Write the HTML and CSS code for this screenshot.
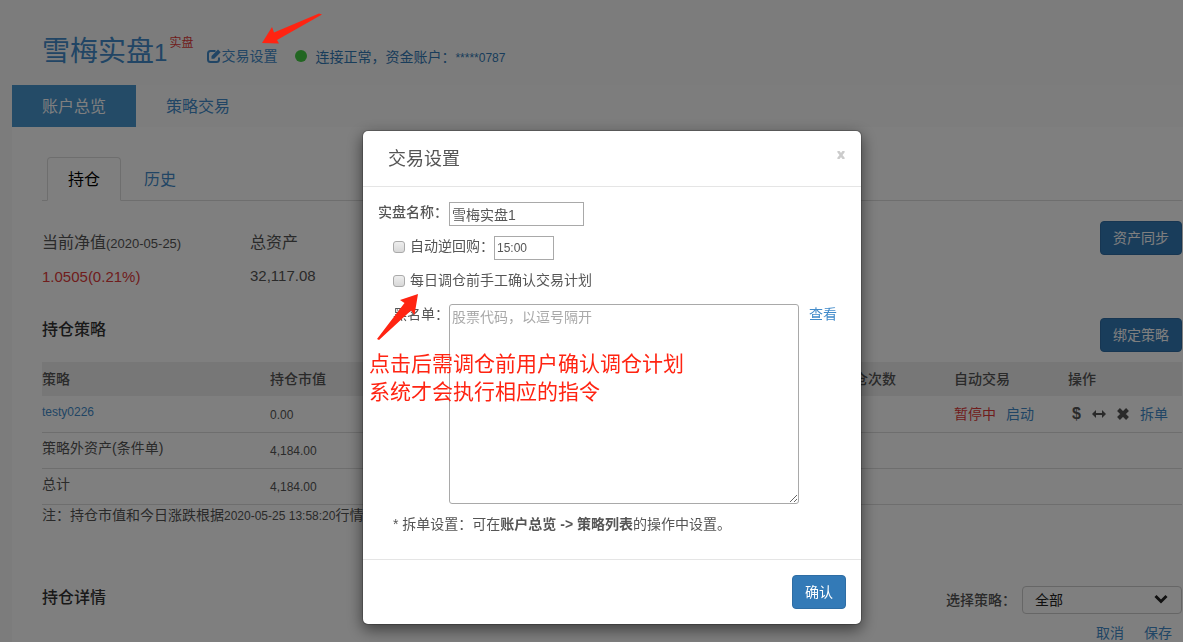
FILE: index.html
```
<!DOCTYPE html>
<html lang="zh-CN">

<head>
    <meta charset="UTF-8">
    <meta name="viewport" content="width=device-width, initial-scale=1.0">
    <title>实盘交易</title>
    <link rel="stylesheet" href="styles.css">
</head>

<body>
    <div class="page">
        <header class="account">
            <h1 class="account-name">雪梅实盘<span class="account-no">1</span></h1>
            <span class="account-tag">实盘</span>
            <a href="#" class="account-setting">
                <svg class="icon-edit" viewBox="0 0 14 14" width="14" height="14">
                    <path d="M8.500 2H3.500Q1 2 1 4.500v6q0 2.500 2.500 2.500h6q2.500 0 2.500-2.500V8.500" fill="none" stroke="currentColor" stroke-width="2" />
                    <path d="M4.500 7 11 .500 13.700 3.200 7.200 9.700H4.500z" fill="currentColor" />
                </svg>交易设置</a>
            <span class="status-dot"></span>
            <span class="status-text">连接正常，资金账户：<span class="num">*****0787</span></span>
        </header>

        <nav class="main-nav">
            <a href="#" class="active">账户总览</a>
            <a href="#">策略交易</a>
        </nav>

        <main class="panel">
            <nav class="tabs">
                <a href="#" class="active">持仓</a>
                <a href="#">历史</a>
            </nav>

            <section class="summary">
                <div class="stat">
                    <div class="stat-label">当前净值<span class="stat-date">(2020-05-25)</span></div>
                    <div class="stat-value red">1.0505(0.21%)</div>
                </div>
                <div class="stat">
                    <div class="stat-label">总资产</div>
                    <div class="stat-value">32,117.08</div>
                </div>
                <button type="button" class="btn">资产同步</button>
            </section>

            <div class="section-head">
                <h2>持仓策略</h2>
                <button type="button" class="btn">绑定策略</button>
            </div>

            <table class="strategy">
                <thead>
                    <tr>
                        <th class="col-name">策略</th>
                        <th>持仓市值</th>
                        <th colspan="4" class="col-wide"></th>
                        <th>调仓次数</th>
                        <th>自动交易</th>
                        <th>操作</th>
                    </tr>
                </thead>
                <tbody>
                    <tr>
                        <td class="name"><a href="#" class="num">testy0226</a></td>
                        <td><span class="num">0.00</span></td>
                        <td colspan="4"></td>
                        <td></td>
                        <td><span class="red">暂停中</span> <a href="#" class="start">启动</a></td>
                        <td>
                            <div class="actions">
                                <span class="dollar">$</span>
                                <svg viewBox="0 0 14 8" width="14" height="8">
                                    <path d="M0 4 4 0V3h6V0L14 4l-4 4V5H4v3z" fill="currentColor" />
                                </svg>
                                <svg viewBox="0 0 12 12" width="12" height="12">
                                    <path d="M1.500 1.500 10.500 10.500M10.500 1.500 1.500 10.500" stroke="currentColor" stroke-width="4" />
                                </svg>
                                <a href="#">拆单</a>
                            </div>
                        </td>
                    </tr>
                    <tr>
                        <td class="name">策略外资产(条件单)</td>
                        <td><span class="num">4,184.00</span></td>
                        <td colspan="7"></td>
                    </tr>
                    <tr>
                        <td class="name">总计</td>
                        <td><span class="num">4,184.00</span></td>
                        <td colspan="7"></td>
                    </tr>
                </tbody>
            </table>
            <p class="note">注：持仓市值和今日涨跌根据<span class="num">2020-05-25 13:58:20</span>行情数据</p>

            <div class="section-head detail-head">
                <h2>持仓详情</h2>
                <div class="filter">
                    <label for="strategy">选择策略：</label>
                    <div class="select-box">
                        <select id="strategy">
                            <option>全部</option>
                        </select>
                        <svg class="chevron" viewBox="0 0 14 10" width="14" height="10">
                            <path d="M1.500 2 7 7.500 12.500 2" fill="none" stroke="currentColor" stroke-width="3" />
                        </svg>
                    </div>
                </div>
            </div>
            <div class="detail-links">
                <a href="#">取消</a>
                <a href="#">保存</a>
            </div>
        </main>
    </div>

    <div class="overlay">
        <form class="modal">
            <div class="modal-header">
                <h4>交易设置</h4>
                <button type="button" class="close" aria-label="关闭">
                    <svg viewBox="0 0 8 8" width="8" height="8">
                        <path d="M1 0 7 8M7 0 1 8" stroke="currentColor" stroke-width="2.500" />
                    </svg>
                </button>
            </div>
            <div class="modal-body">
                <div class="row">
                    <label for="name" class="strong">实盘名称：</label>
                    <input type="text" id="name" class="name-input" value="雪梅实盘1">
                </div>
                <div class="row indent">
                    <input type="checkbox" id="repo">
                    <label for="repo">自动逆回购：</label>
                    <input type="text" class="time-input" value="15:00" aria-label="自动逆回购时间">
                </div>
                <div class="row indent">
                    <input type="checkbox" id="confirm">
                    <label for="confirm">每日调仓前手工确认交易计划</label>
                </div>
                <div class="row indent blacklist">
                    <label for="blacklist">黑名单：</label>
                    <textarea id="blacklist" placeholder="股票代码，以逗号隔开"></textarea>
                    <a href="#">查看</a>
                </div>
                <p class="tip">* 拆单设置：可在<b>账户总览 -&gt; 策略列表</b>的操作中设置。</p>
            </div>
            <div class="modal-footer">
                <button type="submit" class="btn">确认</button>
            </div>
        </form>
    </div>

    <!-- 标注 -->
    <svg class="mark mark-top" viewBox="0 0 60 32" width="60" height="32">
        <path d="M0 30 10 14 12 19.500 57 .500 60 1.500 15 27 17 30.500z" fill="#ff2412" />
    </svg>
    <svg class="mark mark-modal" viewBox="0 0 44 48" width="44" height="48">
        <path d="M42 1 24 7 28.500 10 1 46 3 47 35 17.500 38.500 22z" fill="#ff2412" />
    </svg>
    <p class="mark mark-text">点击后需调仓前用户确认调仓计划<br>系统才会执行相应的指令</p>
</body>

</html>
```
FILE: styles.css
```
* {
    box-sizing: border-box;
}

body {
    margin: 0;
    height: 100vh;
    overflow: hidden;
    background-color: #f8f8f8;
    color: #555;
    font-family: "Liberation Sans", Arial, "Noto Sans CJK SC", sans-serif;
    font-size: 14px;
    line-height: 20px;
}

h1,
h2,
h4,
p {
    margin: 0;
    font-weight: normal;
}

a {
    color: #428bca;
    text-decoration: none;
}

input,
select,
textarea,
button {
    font: inherit;
    color: inherit;
}

.red {
    color: #e03a3a;
}

.num {
    font-size: 12px;
}

.btn {
    height: 34px;
    padding: 0 12px;
    border: 1px solid #2e6da4;
    border-radius: 4px;
    background-color: #337ab7;
    color: #fff;
}

/* 账户信息 */
.page {
    padding-left: 12px;
}

.account {
    display: flex;
    align-items: flex-start;
    height: 85px;
    padding: 30px 0 0 30px;
}

.account-name {
    font-size: 28px;
    line-height: 44px;
    color: #428bca;
}

.account-no {
    font-size: 24px;
}

.account-tag {
    margin: 3px 14px 0 2px;
    font-size: 12px;
    color: #e03a3a;
}

.account-setting {
    display: flex;
    align-items: center;
    margin-top: 16px;
}

.status-dot {
    width: 12px;
    height: 12px;
    margin: 20px 8px 0 18px;
    border-radius: 50%;
    background-color: #4c4;
}

.status-text {
    margin-top: 17px;
    color: #337ab7;
}

/* 导航 */
.main-nav {
    display: flex;
    background-color: #fbfbfb;
    font-size: 16px;
    line-height: 40px;
}

.main-nav a {
    padding: 2px 30px 0;
}

.main-nav .active {
    background-color: #4896cf;
    color: #fff;
}

.panel {
    min-height: 515px;
    padding: 30px 1px 0 30px;
    background-color: #fff;
}

.tabs {
    display: flex;
    gap: 2px;
    padding-left: 5px;
    border-bottom: 1px solid #ddd;
    font-size: 16px;
    line-height: 40px;
}

.tabs a {
    margin-bottom: -1px;
    padding: 2px 20px 0;
    border: 1px solid transparent;
    border-radius: 4px 4px 0 0;
}

.tabs .active {
    border-color: #ddd #ddd #fff;
    background-color: #fff;
    color: #000;
}

/* 资产概况 */
.summary {
    display: flex;
    padding-top: 20px;
}

.stat {
    width: 208px;
}

.stat-label {
    padding-top: 10px;
    font-size: 16px;
    line-height: 24px;
}

.stat-date {
    font-size: 13px;
}

.stat-value {
    margin-top: 10px;
    font-size: 15px;
    line-height: 22px;
}

.summary .btn {
    margin-left: auto;
}

.section-head {
    display: flex;
    justify-content: space-between;
    align-items: flex-start;
    margin-top: 30px;
}

.section-head h2 {
    font-size: 16px;
    font-weight: 500;
    line-height: 24px;
    color: #333;
}

/* 策略列表 */
.strategy {
    width: 100%;
    margin-top: 10px;
    border-collapse: collapse;
    table-layout: fixed;
}

.strategy th {
    width: 10%;
    height: 34px;
    padding: 0;
    background-color: #efefef;
    font-weight: 500;
    text-align: left;
}

.strategy .col-name {
    width: 20%;
}

.strategy .col-wide {
    width: 40%;
}

.strategy td {
    height: 36px;
    padding: 7px 0 6px;
    border-bottom: 1px solid #ddd;
}

.strategy .name {
    padding: 4px 0 9px;
}

.start {
    margin-left: 6px;
}

.actions {
    display: flex;
    align-items: center;
    gap: 11px;
    padding-left: 4px;
}

.dollar {
    font-size: 16px;
    font-weight: bold;
}

/* 持仓详情 */
.detail-head {
    margin-top: 60px;
}

.filter {
    display: flex;
    align-items: center;
    gap: 6px;
}

.filter label {
    font-weight: 500;
}

.select-box {
    position: relative;
}

.select-box select {
    display: block;
    width: 160px;
    height: 28px;
    padding: 0 12px;
    border: 1px solid #ccc;
    border-radius: 4px;
    background-color: #fff;
    color: #222;
    appearance: none;
}

.chevron {
    position: absolute;
    top: 8px;
    right: 14px;
    color: #222;
}

.detail-links {
    display: flex;
    justify-content: flex-end;
    gap: 20px;
    padding: 9px 10px 0 0;
}

/* 弹窗 */
.overlay {
    position: fixed;
    inset: 0;
    display: flex;
    justify-content: center;
    align-items: flex-start;
    padding: 130px 0 0 41px;
    background-color: rgba(0, 0, 0, 0.5);
}

.modal {
    width: 500px;
    border: 1px solid rgba(0, 0, 0, 0.2);
    border-radius: 6px;
    background-color: #fff;
    background-clip: padding-box;
    box-shadow: 0 5px 15px rgba(0, 0, 0, 0.5);
}

.modal-header {
    display: flex;
    justify-content: space-between;
    align-items: flex-start;
    padding: 16px 16px 14px 25px;
    border-bottom: 1px solid #e5e5e5;
}

.modal-header h4 {
    font-size: 18px;
    line-height: 25px;
}

.close {
    display: flex;
    padding: 4px 0;
    border: 0;
    background: none;
    color: #ccc;
}

.modal-body {
    padding: 15px 15px 25px;
}

.row {
    display: flex;
    align-items: flex-start;
    margin-bottom: 10px;
}

.indent {
    padding-left: 15px;
}

.row .strong {
    width: 71px;
    font-weight: 500;
}

.row input[type="text"] {
    height: 24px;
    padding: 1px 2px;
    border: 1px solid #a9a9a9;
}

.row .name-input {
    width: 135px;
}

.row .time-input {
    width: 60px;
    font-size: 12px;
}

.row input[type="checkbox"] {
    width: 12px;
    height: 12px;
    margin: 5px 5px 0 0;
    border: 1px solid #aaa;
    border-radius: 3px;
    background: linear-gradient(#eee, #d8d8d8);
    appearance: none;
}

.row input[type="checkbox"]:checked {
    background: #337ab7;
}

.blacklist {
    margin-top: 14px;
}

.blacklist textarea {
    width: 350px;
    height: 200px;
    margin-right: 10px;
    padding: 2px;
    border: 1px solid #a9a9a9;
    border-radius: 3px;
}

.blacklist textarea::placeholder {
    color: #a9a9a9;
}

.tip {
    padding-left: 15px;
}

.modal-footer {
    padding: 15px;
    border-top: 1px solid #e5e5e5;
    text-align: right;
}

.modal-footer .btn {
    vertical-align: top;
}

/* 标注 */
.mark {
    position: absolute;
}

.mark-top {
    top: 13px;
    left: 262px;
}

.mark-modal {
    top: 293px;
    left: 376px;
}

.mark-text {
    top: 350px;
    left: 369px;
    font-size: 21px;
    line-height: 28px;
    color: #ff2412;
}
```
